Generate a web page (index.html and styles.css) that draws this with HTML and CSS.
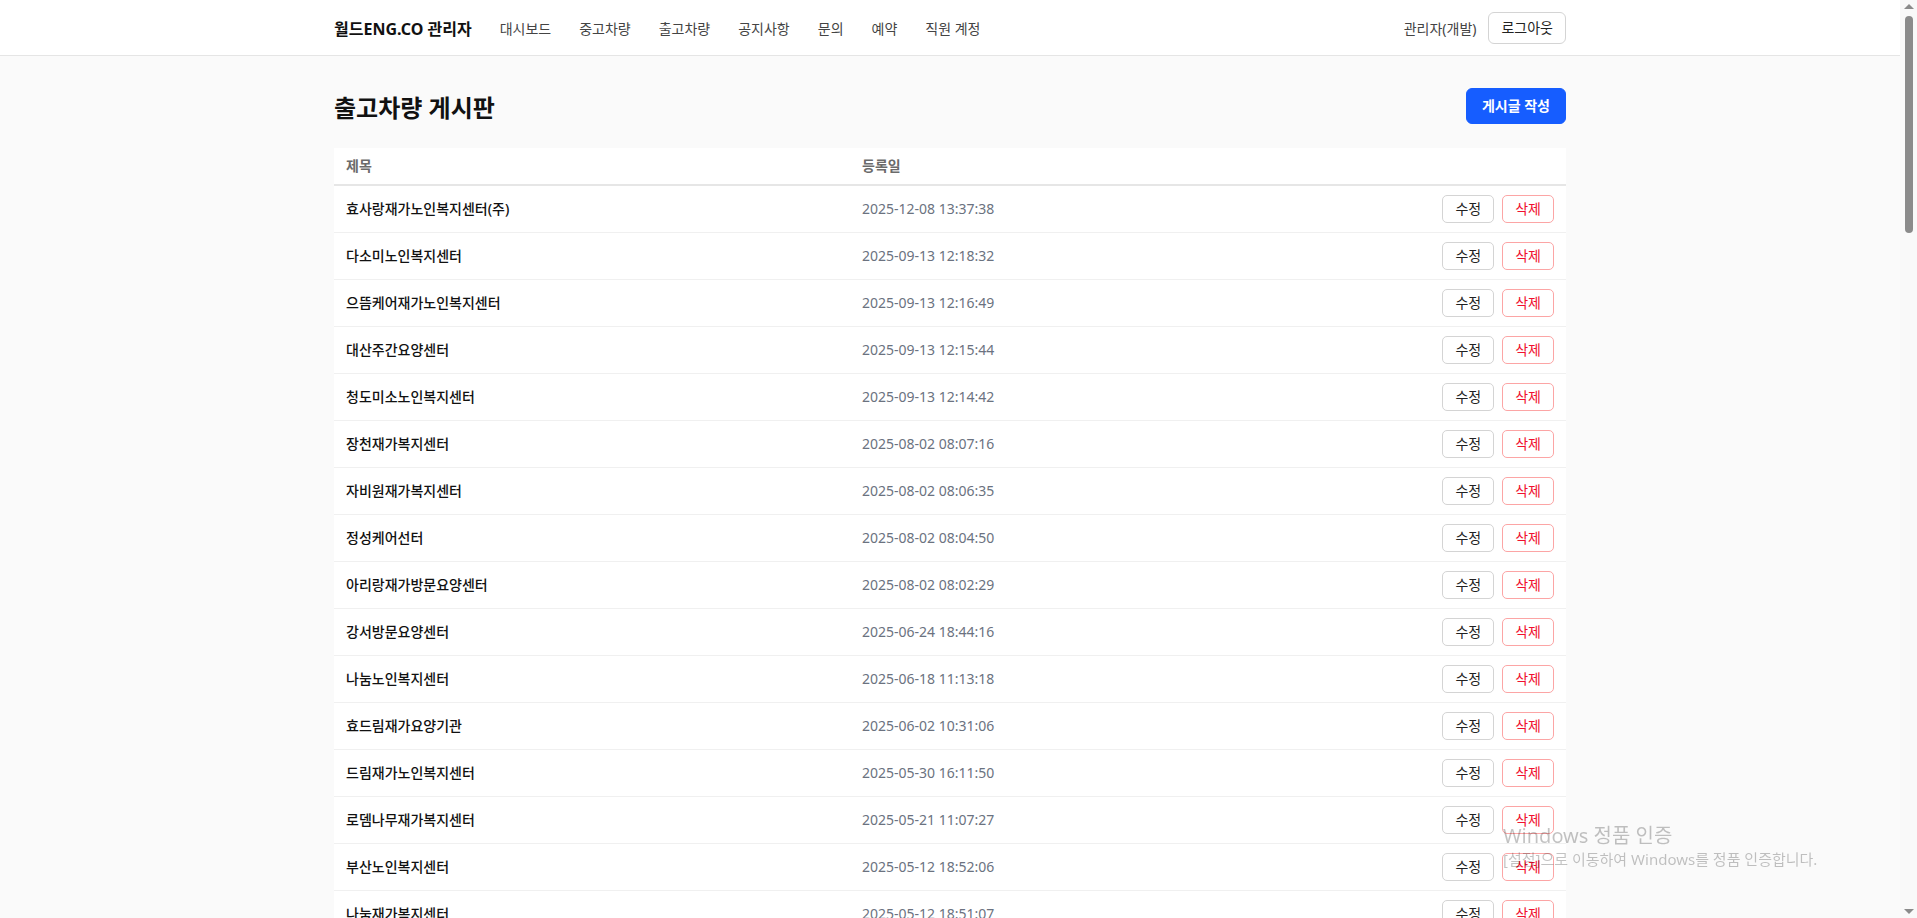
FILE: index.html
```html
<!doctype html>
<html lang="ko">

<head>
  <meta charset="utf-8">
  <title>출고차량 게시판 - 월드ENG.CO 관리자</title>
  <meta name="viewport" content="width=device-width, initial-scale=1.0">
  <link rel="stylesheet" href="styles.css">
</head>

<body>
  <!-- Top Bar -->
  <header class="topbar">
    <div class="topbar-inner">
      <a class="brand" href="#">월드ENG.CO 관리자</a>
      <nav class="nav">
        <a href="#">대시보드</a>
        <a href="#">중고차량</a>
        <a href="#">출고차량</a>
        <a href="#">공지사항</a>
        <a href="#">문의</a>
        <a href="#">예약</a>
        <a href="#">직원 계정</a>
      </nav>
      <div class="user-area">
        <span class="user-name">관리자(개발)</span>
        <button class="btn btn-outline" type="button">로그아웃</button>
      </div>
    </div>
  </header>

  <!-- Board -->
  <main class="page">
    <div class="page-head">
      <h1 class="page-title">출고차량 게시판</h1>
      <button class="btn btn-primary" type="button">게시글 작성</button>
    </div>

    <table class="board">
      <colgroup>
        <col class="col-title">
        <col class="col-date">
        <col>
      </colgroup>
      <thead>
        <tr>
          <th>제목</th>
          <th>등록일</th>
          <th></th>
        </tr>
      </thead>
      <tbody>
        <tr><td class="title">효사랑재가노인복지센터(주)</td><td class="date">2025-12-08 13:37:38</td><td class="actions"><button class="btn btn-sm">수정</button><button class="btn btn-sm btn-danger">삭제</button></td></tr>
        <tr><td class="title">다소미노인복지센터</td><td class="date">2025-09-13 12:18:32</td><td class="actions"><button class="btn btn-sm">수정</button><button class="btn btn-sm btn-danger">삭제</button></td></tr>
        <tr><td class="title">으뜸케어재가노인복지센터</td><td class="date">2025-09-13 12:16:49</td><td class="actions"><button class="btn btn-sm">수정</button><button class="btn btn-sm btn-danger">삭제</button></td></tr>
        <tr><td class="title">대산주간요양센터</td><td class="date">2025-09-13 12:15:44</td><td class="actions"><button class="btn btn-sm">수정</button><button class="btn btn-sm btn-danger">삭제</button></td></tr>
        <tr><td class="title">청도미소노인복지센터</td><td class="date">2025-09-13 12:14:42</td><td class="actions"><button class="btn btn-sm">수정</button><button class="btn btn-sm btn-danger">삭제</button></td></tr>
        <tr><td class="title">장천재가복지센터</td><td class="date">2025-08-02 08:07:16</td><td class="actions"><button class="btn btn-sm">수정</button><button class="btn btn-sm btn-danger">삭제</button></td></tr>
        <tr><td class="title">자비원재가복지센터</td><td class="date">2025-08-02 08:06:35</td><td class="actions"><button class="btn btn-sm">수정</button><button class="btn btn-sm btn-danger">삭제</button></td></tr>
        <tr><td class="title">정성케어선터</td><td class="date">2025-08-02 08:04:50</td><td class="actions"><button class="btn btn-sm">수정</button><button class="btn btn-sm btn-danger">삭제</button></td></tr>
        <tr><td class="title">아리랑재가방문요양센터</td><td class="date">2025-08-02 08:02:29</td><td class="actions"><button class="btn btn-sm">수정</button><button class="btn btn-sm btn-danger">삭제</button></td></tr>
        <tr><td class="title">강서방문요양센터</td><td class="date">2025-06-24 18:44:16</td><td class="actions"><button class="btn btn-sm">수정</button><button class="btn btn-sm btn-danger">삭제</button></td></tr>
        <tr><td class="title">나눔노인복지센터</td><td class="date">2025-06-18 11:13:18</td><td class="actions"><button class="btn btn-sm">수정</button><button class="btn btn-sm btn-danger">삭제</button></td></tr>
        <tr><td class="title">효드림재가요양기관</td><td class="date">2025-06-02 10:31:06</td><td class="actions"><button class="btn btn-sm">수정</button><button class="btn btn-sm btn-danger">삭제</button></td></tr>
        <tr><td class="title">드림재가노인복지센터</td><td class="date">2025-05-30 16:11:50</td><td class="actions"><button class="btn btn-sm">수정</button><button class="btn btn-sm btn-danger">삭제</button></td></tr>
        <tr><td class="title">로뎀나무재가복지센터</td><td class="date">2025-05-21 11:07:27</td><td class="actions"><button class="btn btn-sm">수정</button><button class="btn btn-sm btn-danger">삭제</button></td></tr>
        <tr><td class="title">부산노인복지센터</td><td class="date">2025-05-12 18:52:06</td><td class="actions"><button class="btn btn-sm">수정</button><button class="btn btn-sm btn-danger">삭제</button></td></tr>
        <tr><td class="title">나눔재가복지센터</td><td class="date">2025-05-12 18:51:07</td><td class="actions"><button class="btn btn-sm">수정</button><button class="btn btn-sm btn-danger">삭제</button></td></tr>
      </tbody>
    </table>
  </main>

  <!-- Window scrollbar (drawn, as in the screenshot) -->
  <div class="scrollbar">
    <span class="sb-arrow sb-up"></span>
    <span class="sb-thumb"></span>
    <span class="sb-arrow sb-down"></span>
  </div>

  <!-- OS activation watermark -->
  <div class="watermark">
    <div class="wm-title">Windows 정품 인증</div>
    <div class="wm-text">[설정]으로 이동하여 Windows를 정품 인증합니다.</div>
  </div>
</body>

</html>
```
FILE: styles.css
```css
body {
  margin: 0 17px 0 0;
  background-color: #fafafa;
  color: #111;
  font-family: "Noto Sans", "Noto Sans CJK KR", sans-serif;
  font-size: 14px;
}

a {
  color: inherit;
  text-decoration: none;
}

button {
  font-family: inherit;
}

/* Top bar */
.topbar {
  background-color: #fff;
  border-bottom: 1px solid #e5e5e5;
}

.topbar-inner {
  max-width: 1280px;
  margin: 0 auto;
  padding: 0 24px;
  box-sizing: border-box;
  height: 55px;
  display: flex;
  align-items: center;
}

.brand {
  font-size: 16px;
  font-weight: 700;
  color: #111;
}

.nav {
  display: flex;
  gap: 28px;
  margin-left: 28px;
  color: #444;
}

.user-area {
  margin-left: auto;
  display: flex;
  align-items: center;
  gap: 12px;
}

.user-name {
  color: #444;
}

/* Buttons */
.btn {
  font-size: 14px;
  line-height: 16px;
  border-radius: 6px;
  cursor: pointer;
  background: #fff;
  color: #222;
  border: 1px solid #d4d4d4;
}

.btn-outline {
  padding: 7px 12px;
}

.btn-primary {
  background-color: #165dff;
  border-color: #165dff;
  color: #fff;
  font-weight: 700;
  padding: 9px 15px;
}

.btn-sm {
  padding: 5px 12px;
  border-radius: 5px;
}

.btn-danger {
  color: #f0102e;
  border-color: #fca5a5;
}

/* Page */
.page {
  max-width: 1280px;
  margin: 0 auto;
  padding: 32px 24px 40px;
  box-sizing: border-box;
}

.page-head {
  display: flex;
  align-items: center;
  justify-content: space-between;
  margin-bottom: 24px;
}

.page-title {
  margin: 0;
  font-size: 24px;
  font-weight: 700;
  color: #111;
}

/* Board table */
.board {
  width: 100%;
  table-layout: fixed;
  border-collapse: collapse;
  background-color: #fff;
}

.col-title {
  width: 516px;
}

.col-date {
  width: 400px;
}

.board th {
  text-align: left;
  font-weight: 600;
  color: #6b6b6b;
  padding: 10px 12px;
  line-height: 16px;
  border-bottom: 2px solid #e6e6e6;
}

.board td {
  padding: 9px 12px;
  border-bottom: 1px solid #f0f0f0;
  line-height: 16px;
}

.board .title {
  font-weight: 500;
  color: #111;
}

.board .date {
  color: #6b7280;
}

.board .actions {
  text-align: right;
}

.actions .btn + .btn {
  margin-left: 8px;
}

/* Drawn window scrollbar */
.scrollbar {
  position: fixed;
  top: 0;
  right: 0;
  width: 17px;
  height: 100%;
  background-color: #f9f9f9;
}

.sb-thumb {
  position: absolute;
  left: 5px;
  top: 16px;
  width: 8px;
  height: 217px;
  border-radius: 4px;
  background-color: #8b8b8b;
}

.sb-arrow {
  position: absolute;
  left: 4px;
  width: 0;
  height: 0;
  border-left: 5px solid transparent;
  border-right: 5px solid transparent;
}

.sb-up {
  top: 4px;
  border-bottom: 5px solid #8b8b8b;
}

.sb-down {
  bottom: 4px;
  border-top: 5px solid #8b8b8b;
}

/* Watermark overlay */
.watermark {
  position: fixed;
  left: 1503px;
  top: 823px;
  color: rgba(0, 0, 0, 0.24);
  pointer-events: none;
}

.wm-title {
  font-size: 20px;
  line-height: 26px;
}

.wm-text {
  font-size: 15px;
  line-height: 20px;
}
```
